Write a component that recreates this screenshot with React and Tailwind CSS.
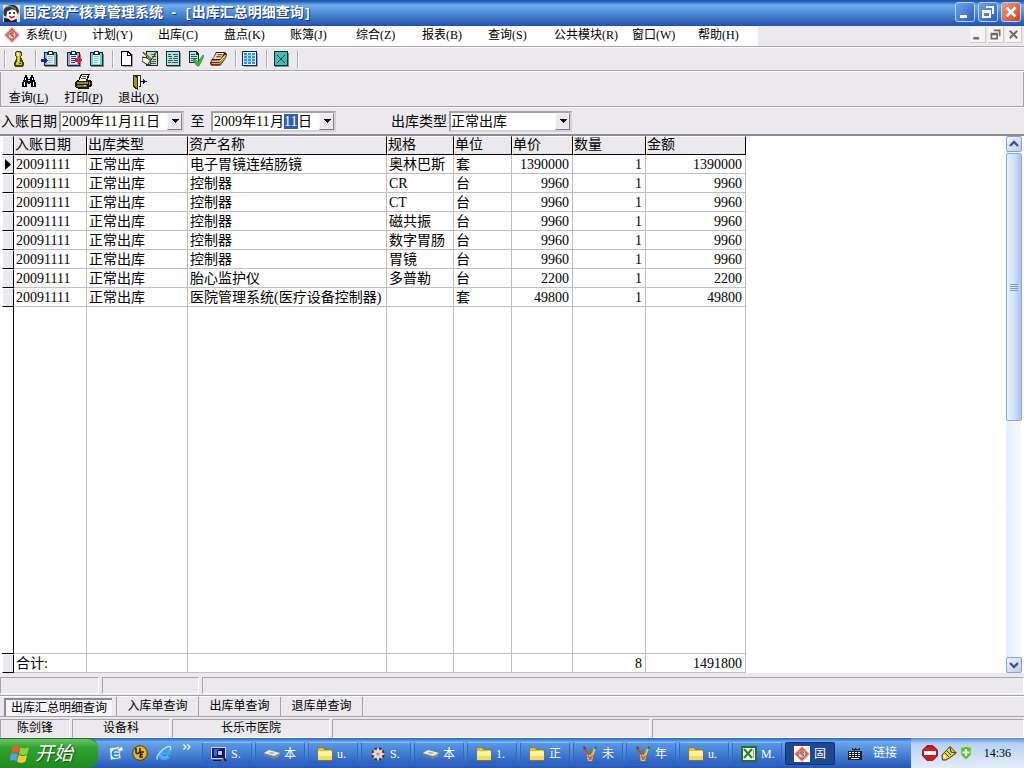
import React from "react";

const SERIF = "font-['Liberation_Serif','Noto_Sans_CJK_SC',serif]";

const Icon = ({ children, className = "w-4 h-4", box = "0 0 16 16", crisp = true }) => (
  <svg viewBox={box} className={"shrink-0 " + className} shapeRendering={crisp ? "crispEdges" : "auto"} aria-hidden="true">
    {children}
  </svg>
);

const AvatarIcon = () => (
  <Icon className="w-[17px] h-[17px]" crisp={false}>
    <path d="M0 0h16v16H0z" fill="#e4e0da" />
    <path d="M1 10C-1 5 2 1 7 0c4-1 8 2 8 6l-1 3-2-4-4-1-4 2-1 5z" fill="#3a3634" />
    <path d="M3 2l3-1 3 1 3 2" stroke="#8d8d8d" fill="none" />
    <path d="M4 6l4-1 4 1 1 4-2 3-4 1-3-3z" fill="#fff" />
    <circle cx="6.500" cy="7.500" r="1" fill="#111" />
    <circle cx="10.500" cy="7.500" r="1" fill="#111" />
    <path d="M6 10.500l2 1.500 3-1.500" stroke="#c22" strokeWidth="1.600" fill="none" />
    <path d="M1 12l4 1 3 2 5-2v3H1z" fill="#1d1d1d" />
  </Icon>
);

const DiamondIcon = ({ boxed = false }) => (
  <Icon className="w-4 h-4" crisp={false}>
    {boxed && <path d="M0 0h16v16H0z" fill="#fff" />}
    <path d="M8 .8L15.200 8 8 15.200.8 8z" fill="#e57a72" stroke="#efa7a1" strokeLinejoin="round" strokeWidth="1.400" />
    <path d="M8 2l6 6-6 6-6-6z" fill="none" stroke="#cc453d" strokeWidth=".9" />
    <circle cx="8" cy="8" r="3.900" fill="#ecdcd6" stroke="#c25049" strokeWidth=".8" />
    <path d="M5.800 8a2.200 2.200 0 0 1 4-1.300M10 9l-1.500 1.200" stroke="#b03a33" strokeWidth="1.200" fill="none" />
    <circle cx="8" cy="8.200" r="1.400" fill="#74857e" />
  </Icon>
);

const KeyIcon = () => (
  <Icon>
    <path d="M5 0h5v1h1v4h-1v2h1v2h1v2h1v4h-1v1H4v-1H3v-4h1V9h1V5H4V1h1z" fill="#4a4600" />
    <path d="M5 1h4v1h1v3H9v6h2v3H5v-3h1V5H5z" fill="#c5bd22" />
    <path d="M6 2h2v3H6z" fill="#ebe9ed" />
    <path d="M7 6h1v5H7zM6 12h1v1H6z" fill="#f2ee84" />
    <path d="M8 12h2v1H8z" fill="#4a4600" />
  </Icon>
);

const Clip = ({ paper, lines, children }) => (
  <Icon className="w-[18px] h-4" box="0 0 18 16">
    <path d="M4 3h13v13H4z" fill="#7d8a8c" />
    <path d="M3 1h13v14H3z" fill="#152b2e" />
    <path d="M4 2h11v12H4z" fill={paper} />
    <path d="M6 4h7v9H6z" fill="#e2f4f1" />
    <path d="M7 0h5v1h1v3H6V1h1z" fill="#152b2e" />
    <path d="M8 1h3v2H8z" fill="#fff" />
    <path d="M7 5.500h5M7 7.500h5M7 9.500h5M7 11.500h4" stroke={lines} />
    {children}
  </Icon>
);

const ClipIn = () => (
  <Clip paper="#8fb5ab" lines="#9db8b0">
    <path d="M0 8h3V6l4 3-4 4v-2H0z" fill="#1226a8" />
  </Clip>
);
const ClipOut = () => (
  <Clip paper="#9ea2ea" lines="#2b2fae">
    <path d="M11 7h3V5l4 4-4 4v-2h-3z" fill="#e01a36" />
  </Clip>
);
const ClipPlain = () => <Clip paper="#74cbd0" lines="#74cbd0" />;

const NewIcon = () => (
  <Icon>
    <path d="M4 3h10v13H4z" fill="#9b9b9b" />
    <path d="M2 0h7l4 4v11H2z" fill="#000" />
    <path d="M3 1h5v4h4v9H3z" fill="#fff" />
    <path d="M9 2v2h2z" fill="#fff" />
  </Icon>
);
const EditIcon = () => (
  <Icon>
    <path d="M4 0h12v15H4z" fill="#11271f" />
    <path d="M5 1h10v13H5z" fill="#bfe0c8" />
    <path d="M9 3.500h5M10 5.500h4M11 8.500h3M10 10.500h4M9 12.500h5" stroke="#3a5a50" />
    <path d="M1 1l9 7-1 1-8-7z" fill="#e8d24a" stroke="#222" strokeWidth=".7" shapeRendering="auto" />
    <path d="M0 6l5 1 4 3-1 4-4-1-4-3z" fill="#fff4cd" stroke="#222" shapeRendering="auto" />
    <path d="M12 3l3-2M6 13l7-9" stroke="#222" shapeRendering="auto" />
  </Icon>
);
const ListIcon = () => (
  <Icon>
    <path d="M2 2h14v14H2z" fill="#8a9696" />
    <path d="M1 0h14v15H1z" fill="#10292c" />
    <path d="M2 1h12v13H2z" fill="#b8e2dd" />
    <path d="M3 3.500h3M8 3.500h5M3 5.500h4M9 5.500h4M4 7.500h3M8 7.500h5M3 9.500h5M9 9.500h4M3 11.500h3M7 11.500h6" stroke="#2b5a5c" />
  </Icon>
);
const CheckIcon = () => (
  <Icon>
    <path d="M1 0h7l3 3v9H1z" fill="#10292c" />
    <path d="M2 1h6v3h2v7H2z" fill="#c5e5df" />
    <path d="M3 3.500h4M3 5.500h6M3 7.500h6M3 9.500h4" stroke="#2b5a5c" />
    <path d="M5 9l2-1 3 3 5-7 1 1-5 10h-2z" fill="#3fb83c" stroke="#14711b" strokeWidth=".6" shapeRendering="auto" />
  </Icon>
);
const BookIcon = () => (
  <Icon className="w-[17px] h-4" box="0 0 17 16" crisp={false}>
    <path d="M6 1h9l2 2-1 4-5 7-2 1H2l-2-2 1-4 2-2z" fill="#3a1c0c" />
    <path d="M6.500 2H14l-3.500 6H3z" fill="#f6dcae" />
    <path d="M7.500 3.700h4.500M6.300 5.700h4.500" stroke="#5a3417" />
    <path d="M1.500 10.200h8.500l5.500-6" stroke="#fff0cf" strokeWidth="1.300" fill="none" />
    <path d="M1.500 12.300h8.500l5.500-6" stroke="#e79a55" strokeWidth="1.200" fill="none" />
    <path d="M2 14.200h7.500l4-4.500" stroke="#c46f38" fill="none" />
  </Icon>
);
const GridIcon = () => (
  <Icon>
    <path d="M2 2h14v14H2z" fill="#9ab" />
    <path d="M0 0h15v15H0z" fill="#0a2d4e" />
    <path d="M1 1h13v13H1z" fill="#eaf9ff" />
    <path d="M2 2h3v11H2zM6 2h3v11H6zM10 2h3v11h-3z" fill="#2f96da" />
    <path d="M2 4.500h11M2 7.500h11M2 10.500h11" stroke="#9ed2f1" />
  </Icon>
);
const CloseBoxIcon = () => (
  <Icon>
    <path d="M2 2h14v14H2z" fill="#7a8c8c" />
    <path d="M1 0h14v15H1z" fill="#07302f" />
    <path d="M2 1h12v13H2z" fill="#46b9b1" />
    <path d="M4 4l8 8M12 4l-8 8" stroke="#0b3f6a" shapeRendering="auto" />
  </Icon>
);

const BinocularsIcon = () => (
  <Icon>
    <path d="M4 1h2v2h1v2h2V3h1V1h2v2h1v3h1v2h1v5h-5V9H9v1H7V9H6v4H1V8h1V6h1V3h1z" fill="#000" />
    <path d="M4 4h1v2H4zM3 8h1v4H3zM11 4h1v2h-1zM12 8h1v4h-1zM7 6h2v1H7z" fill="#fff" />
  </Icon>
);
const PrinterIcon = () => (
  <Icon className="w-[17px] h-4" box="0 0 17 16">
    <path d="M6 0h9v1h-1v3h-1v2h3v1h1v5h-1v1h-2v2H3v-1H1v-1H0V8h1V7h1V6h2V3h1z" fill="#1c1c06" />
    <path d="M7 1h6l-2 6H4z" fill="#fff" />
    <path d="M7 2.500h4M6 4.500h5" stroke="#555" />
    <path d="M2 8h11v2H2z" fill="#8b8a3a" />
    <path d="M2 11h10v2H2z" fill="#77762c" />
    <path d="M14 8h1v3h-1z" fill="#a6a446" />
    <path d="M9 11h2v1H9z" fill="#e8e75a" />
  </Icon>
);
const ExitIcon = () => (
  <Icon>
    <path d="M2 1h8v12H8V3H7v13L2 13z" fill="#2b2a08" />
    <path d="M3 2l3 2v10l-3-2z" fill="#97962c" />
    <path d="M7 2h2v10H7z" fill="#fff" />
    <path d="M10 7h2V5h1v1h1v1h2v1h-2v1h-1v1h-1V8h-2z" fill="#10148c" />
  </Icon>
);

const FolderIcon = () => (
  <Icon crisp={false}>
    <path d="M.5 3l1-1.500h4.500l1.500 2h7.500v11H1z" fill="#e8bd3f" stroke="#8a6a1a" strokeWidth=".7" />
    <path d="M1.200 5.500H15V14H1.200z" fill="#fdf29b" />
    <path d="M1.200 10H15v4H1.200z" fill="#f6da62" />
    <path d="M1.500 5.800h13" stroke="#fffbd8" />
  </Icon>
);
const MonitorIcon = () => (
  <Icon>
    <path d="M0 1h15v12H0z" fill="#d9d5c9" />
    <path d="M1 2h13v10H1z" fill="#141c8e" />
    <path d="M3 3h5v7H3z" fill="#3c6be2" />
    <circle cx="9" cy="7" r="3" fill="#a9cdf5" stroke="#111" />
    <path d="M11 9l4 6" stroke="#2a1c13" strokeWidth="2" shapeRendering="auto" />
    <path d="M2 14.500h8" stroke="#1b1b1b" />
  </Icon>
);
const DriveIcon = () => (
  <Icon crisp={false}>
    <path d="M0 7l5-3 11 3v3l-6 3L0 9z" fill="#7b8282" />
    <path d="M0 7l5-3 11 3-6 3z" fill="#ecece6" />
    <path d="M4 7l3-1 4 1-2 1z" fill="#a2a8a4" />
    <path d="M12 10.500l2-1" stroke="#54e04a" />
  </Icon>
);
const StarIcon = () => (
  <Icon crisp={false}>
    <circle cx="8" cy="8" r="6.800" fill="#39414f" />
    <circle cx="8" cy="8" r="4.600" fill="#8e8a8c" />
    <path d="M8 .5l1.500 4L13 3l-1.500 3.500 4 1.500-4 1.500L13 13l-3.500-1.500-1.500 4-1.500-4L3 13l1.500-3.500L.5 8l4-1.500L3 3l3.500 1.500z" fill="#e8d9d2" />
    <circle cx="8" cy="8" r="1.600" fill="#b98d84" />
  </Icon>
);
const BrushIcon = () => (
  <Icon crisp={false}>
    <path d="M4 7h8l-1.500 8.500h-5z" fill="#dcbf94" stroke="#6d5636" strokeWidth=".7" />
    <path d="M7 9L2.500 2" stroke="#c0462f" strokeWidth="2.200" />
    <path d="M8.300 9V2.500" stroke="#4c8f4a" strokeWidth="1.800" />
    <path d="M10.500 9l2.500-7" stroke="#e9cc4c" strokeWidth="2" />
    <path d="M1 0l3.500 1.500L2 4zM12 2.500L14 0l1 3z" fill="#5a4a36" />
    <path d="M6 10l3.500 3.500M10.500 9.500L7 14" stroke="#b34c38" strokeWidth="1.200" />
  </Icon>
);
const ExcelIcon = () => (
  <Icon>
    <path d="M0 0h16v16H0z" fill="#26702c" />
    <path d="M2 2h12v12H2z" fill="#f1f8ec" />
    <path d="M3 3l8 9M11 3l-8 9" stroke="#2b7a31" strokeWidth="2" shapeRendering="auto" />
    <path d="M12.500 4v8" stroke="#7fb37e" />
  </Icon>
);

const MailIcon = () => (
  <Icon crisp={false}>
    <path d="M1.500 3l10-1.500 1.500 12-10.500 1.500z" fill="#dff1fc" stroke="#5289ac" strokeWidth=".7" />
    <path d="M10.500 6a3.600 3.600 0 1 0 .3 5M5 8.700h6" stroke="#2a86c6" strokeWidth="1.700" fill="none" />
    <path d="M9 4.500L14 1l1.500 4-4 2z" fill="#f6fbff" stroke="#5289ac" strokeWidth=".7" />
  </Icon>
);
const UltraIcon = () => (
  <Icon crisp={false}>
    <circle cx="8" cy="8" r="7.300" fill="#e9b91e" stroke="#4f3c07" />
    <path d="M4 3v4q0 2 2 1.500T8 6V3M12 7H9l-1 5h3M8.500 9.500H11" stroke="#2d2108" strokeWidth="1.600" fill="none" />
  </Icon>
);
const IeIcon = () => (
  <Icon crisp={false}>
    <path d="M12.800 11.200a5.200 5.200 0 1 1 .7-2.900H4" stroke="#3ea6ee" strokeWidth="2.800" fill="none" />
    <path d="M12 10.800a4.600 4.600 0 0 1-7.500-1" stroke="#8fd2fb" strokeWidth="1" fill="none" />
    <path d="M1.500 14.500C-1 11 9 1.500 13.500 1.500c2 0 1.500 2.500.5 4" stroke="#b5e1fb" strokeWidth="1.300" fill="none" />
  </Icon>
);
const WindowsFlag = () => (
  <Icon className="w-5 h-5" box="0 0 18 18" crisp={false}>
    <path d="M2.500 2.500q3-2 6.300 0L7.300 8.500q-3-2-6.300 0z" fill="#ee5a28" />
    <path d="M9.500 3q3.500 2 7.500 0l-1.500 6q-3.500 2-7.500 0z" fill="#8fd13f" />
    <path d="M.8 9.500q3-2 6.300 0l-1.500 6q-3-2-6.300 0z" fill="#5a9cf2" />
    <path d="M7.800 10q3.500 2 7.500 0l-1.500 6q-3.500 2-7.500 0z" fill="#fbcb34" />
  </Icon>
);
const KeyboardIcon = () => (
  <Icon className="w-[14px] h-4" box="0 0 14 16">
    <path d="M4 3h1v1h2V3h1v1h3V3h1v2H7v2H6V5H4z" fill="#16283f" />
    <path d="M0 6h14v9H0z" fill="#16202e" />
    <path d="M1 7.500h12M1 9.500h12M1 11.500h12" stroke="#fff" strokeDasharray="2 1" />
    <path d="M3 13.500h8" stroke="#fff" />
  </Icon>
);
const NoEntryIcon = () => (
  <Icon crisp={false}>
    <path d="M5 .7h6L15.300 5v6L11 15.300H5L.7 11V5z" fill="#cf1c1c" stroke="#7b0d12" />
    <path d="M2 6h12v4H2z" fill="#fff" />
  </Icon>
);
const TagIcon = () => (
  <Icon crisp={false}>
    <path d="M1 10l8-8.500L15.300 8 9 12.500 5 15H1.500z" fill="#e6d93b" stroke="#3b370c" />
    <path d="M9 2l1 5 5 1M4 8l4 4M6 6l4 4" stroke="#3b370c" fill="none" />
    <path d="M2.500 12.500l2-2" stroke="#fffbd0" strokeWidth="1.500" />
  </Icon>
);
const ShieldIcon = () => (
  <Icon className="w-3 h-[14px]" box="0 0 12 14" crisp={false}>
    <path d="M1 1l2 .5L6 .5l3 1 2-.5v8l-5 4.500L1 9z" fill="#58bd2c" stroke="#b6e78f" strokeWidth=".8" />
    <path d="M6 3v7M2.500 6.500h7" stroke="#fff" strokeWidth="2.200" />
  </Icon>
);

const MinGlyph = () => <path d="M4 12h7v3H4z" fill="currentColor" />;
const RestoreGlyph = () => (
  <>
    <path d="M7 3h8v8h-2V5H7z" fill="currentColor" />
    <path d="M3 7h9v8H3zM5 10v3h5v-3z" fill="currentColor" fillRule="evenodd" />
  </>
);
const CloseGlyph = () => (
  <path d="M4.500 4.500l9 9M13.500 4.500l-9 9" stroke="currentColor" strokeWidth="2.500" shapeRendering="auto" />
);

const TitleButton = ({ label, tone, children }) => (
  <button aria-label={label} className={"w-5 h-5 rounded-[3px] border border-[#b9d0f5] text-white flex items-center justify-center " + tone}>
    <svg viewBox="0 0 18 18" className="w-[18px] h-[18px]" shapeRendering="crispEdges">{children}</svg>
  </button>
);
const MdiButton = ({ label, children }) => (
  <button aria-label={label} className="w-4 h-4 bg-[#f5f4f3] border-r border-b border-[#cbc9cc] text-[#6f6b68] flex items-center justify-center">
    <svg viewBox="0 0 18 18" className="w-[15px] h-[15px]">{children}</svg>
  </button>
);

const menus = [
  ["系统", "U"], ["计划", "Y"], ["出库", "C"], ["盘点", "K"], ["账簿", "J"], ["综合", "Z"],
  ["报表", "B"], ["查询", "S"], ["公共模块", "R"], ["窗口", "W"], ["帮助", "H"],
];

const toolGroups = [
  [["密码", KeyIcon]],
  [["入库", ClipIn], ["退库", ClipOut], ["清单", ClipPlain]],
  [["新建", NewIcon], ["编辑", EditIcon], ["列表", ListIcon], ["审核", CheckIcon], ["账本", BookIcon]],
  [["表格", GridIcon]],
  [["关闭", CloseBoxIcon]],
];

const actions = [["查询", "L", BinocularsIcon], ["打印", "P", PrinterIcon], ["退出", "X", ExitIcon]];

const columns = ["入账日期", "出库类型", "资产名称", "规格", "单位", "单价", "数量", "金额"];
const rows = [
  ["电子胃镜连结肠镜", "奥林巴斯", "套", "1390000"],
  ["控制器", "CR", "台", "9960"],
  ["控制器", "CT", "台", "9960"],
  ["控制器", "磁共振", "台", "9960"],
  ["控制器", "数字胃肠", "台", "9960"],
  ["控制器", "胃镜", "台", "9960"],
  ["胎心监护仪", "多普勒", "台", "2200"],
  ["医院管理系统(医疗设备控制器)", "", "套", "49800"],
].map(([name, spec, unit, price]) => ["20091111", "正常出库", name, spec, unit, price, "1", price]);

const tasks = [
  ["S.", MonitorIcon], ["本", DriveIcon], ["u.", FolderIcon], ["S.", StarIcon], ["本", DriveIcon], ["1.", FolderIcon],
  ["正", FolderIcon], ["未", BrushIcon], ["年", BrushIcon], ["u.", FolderIcon], ["M.", ExcelIcon],
];

const Edge = () => <div className="h-[2px] shrink-0 bg-white border-t border-[#a5a3a8]" />;
const Sep = () => <div className="w-[2px] h-[18px] bg-white border-l border-[#b0aeb3]" />;
const Arrow = () => (
  <svg viewBox="0 0 8 4" className="w-2 h-1" shapeRendering="crispEdges" aria-hidden="true"><path d="M0 0h8L4 4z" fill="#000" /></svg>
);

const sunken = "h-[21px] bg-white border-2 border-t-[#a5a3a8] border-l-[#a5a3a8] border-r-[#d4d2d6] border-b-[#d4d2d6] flex items-center";
const raised = "w-[15px] h-[17px] shrink-0 bg-[#ebe9ed] border border-t-[#f8f8f8] border-l-[#f8f8f8] border-r-[#807e82] border-b-[#807e82] flex items-center justify-center";

const DateField = ({ id, label, marked }) => (
  <div role="group" aria-label={label} className={sunken + " w-[125px] pl-px"}>
    <input id={id} aria-label="年" defaultValue="2009" className="w-7 p-0 outline-none" />年
    <input aria-label="月" defaultValue="11" className="w-[14px] p-0 outline-none" />月
    <input aria-label="日" defaultValue="11" className={"w-[14px] h-[15px] p-0 outline-none " + (marked ? "bg-[#335ea8] text-white" : "")} />日
    <button aria-label="选择日期" className={raised + " ml-auto"}><Arrow /></button>
  </div>
);

const ScrollButton = ({ label, d }) => (
  <button aria-label={label} className="w-4 h-4 shrink-0 rounded-[2px] border border-[#8ba3c9] bg-linear-to-br from-[#eef4ff] to-[#bccdf0] flex items-center justify-center">
    <svg viewBox="0 0 10 8" className="w-[10px] h-2"><path d={d} fill="none" stroke="#435676" strokeWidth="2.400" /></svg>
  </button>
);

const StatusPanel = ({ width, children }) => (
  <div className={"border border-t-[#a5a3a8] border-l-[#a5a3a8] border-r-white border-b-white text-center leading-4 overflow-hidden " + width}>{children}</div>
);

const indicator = "bg-[#ebe9ed] border-r border-b border-black border-t border-l border-t-white border-l-white p-0";
const cell = "p-0 pt-px h-[19px] leading-[17px] border-r border-b border-[#c0c0c0] whitespace-nowrap ";
const align = (j) => (j > 4 ? "text-right pr-[3px]" : "pl-[2px]");

export default function App() {
  return (
    <div className={"h-screen flex flex-col overflow-hidden bg-[#ebe9ed] text-black text-[12px] " + SERIF}>
      <header className="h-[26px] shrink-0 flex items-center px-[3px] bg-linear-to-b from-[#2456b4] from-4% via-[#6db0ec] via-20% to-[#2450ad] text-white">
        <AvatarIcon />
        <h1 className="ml-[3px] text-[14px] leading-5 font-bold whitespace-pre [text-shadow:1px_1px_0_#1a3a80]">
          固定资产核算管理系统<span className="font-['Liberation_Mono'] text-[12px]"> - [</span>出库汇总明细查询<span className="font-['Liberation_Mono'] text-[12px]">]</span>
        </h1>
        <div className="ml-auto flex gap-[3px] pb-[2px]">
          <TitleButton label="最小化" tone="bg-linear-to-br from-[#6fa3ec] to-[#2a5cc0]"><MinGlyph /></TitleButton>
          <TitleButton label="还原" tone="bg-linear-to-br from-[#6fa3ec] to-[#2a5cc0]"><RestoreGlyph /></TitleButton>
          <TitleButton label="关闭" tone="bg-linear-to-br from-[#f09a7c] to-[#cf3a12]"><CloseGlyph /></TitleButton>
        </div>
      </header>

      <nav className="h-5 shrink-0 flex justify-between">
        <div className="flex bg-white pl-1 pr-[18px]">
          <div className="w-[22px] pt-px"><DiamondIcon /></div>
          {menus.map(([name, k]) => (
            <button key={k} className={"text-left leading-4 pb-[2px] whitespace-nowrap " + (name.length > 2 ? "w-[78px]" : k === "H" ? "w-[42px]" : "w-[66px]")}>
              {name}({k})
            </button>
          ))}
        </div>
        <div className="flex gap-[2px] pt-px pr-[2px]">
          <MdiButton label="最小化窗口"><MinGlyph /></MdiButton>
          <MdiButton label="还原窗口"><RestoreGlyph /></MdiButton>
          <MdiButton label="关闭窗口"><CloseGlyph /></MdiButton>
        </div>
      </nav>
      <Edge />

      <div role="toolbar" className="h-[22px] shrink-0 flex items-center pl-1">
        {toolGroups.map((g, i) => (
          <React.Fragment key={i}>
            <Sep />
            <div className="flex gap-[6px] pl-1 pr-2">
              {g.map(([label, I]) => <button key={label} aria-label={label} className="w-[17px] flex justify-center"><I /></button>)}
            </div>
          </React.Fragment>
        ))}
        <Sep />
      </div>
      <Edge />

      <div role="toolbar" className="h-[34px] shrink-0 flex border-l border-r border-[#a5a3a8]">
        {actions.map(([name, k, I]) => (
          <button key={k} className="w-[55px] pt-[2px] flex flex-col items-center">
            <I />
            <span className="leading-4">{name}(<u>{k}</u>)</span>
          </button>
        ))}
      </div>
      <Edge />

      <form className="h-7 shrink-0 flex items-center text-[14px] leading-[19px] whitespace-nowrap border-b-2 border-[#8d8b90]" onSubmit={(e) => e.preventDefault()}>
        <label htmlFor="from" className="w-[59px] pl-px">入账日期</label>
        <DateField id="from" label="起始日期" />
        <label htmlFor="to" className="w-[27px] text-center">至</label>
        <DateField id="to" label="截止日期" marked />
        <label htmlFor="kind" className="ml-[55px] w-[58px]">出库类型</label>
        <div className={sunken + " relative w-[123px]"}>
          <select id="kind" className="appearance-none w-full h-[17px] p-0 leading-[17px] outline-none bg-transparent">
            <option>正常出库</option>
          </select>
          <span className={raised + " absolute right-0 top-0 pointer-events-none"}><Arrow /></span>
        </div>
      </form>

      <main className="flex-1 min-h-0 flex bg-white pl-[2px] pr-[2px] text-[14px] leading-[18px]">
        <table className="table-fixed border-separate border-spacing-0 w-[744px] shrink-0">
          <colgroup>
            <col className="w-[12px]" /><col className="w-[73px]" /><col className="w-[101px]" /><col className="w-[199px]" />
            <col className="w-[67px]" /><col className="w-[58px]" /><col className="w-[61px]" /><col className="w-[73px]" /><col className="w-[100px]" />
          </colgroup>
          <thead>
            <tr className="h-[19px]">
              <th className={indicator} aria-label="行" />
              {columns.map((c) => (
                <th key={c} scope="col" className="h-[19px] p-0 pb-px text-left font-normal leading-4 bg-[#ebe9ed] border-t border-l border-t-white border-l-white border-r border-b border-r-black border-b-black">{c}</th>
              ))}
            </tr>
          </thead>
          <tbody>
            {rows.map((r, i) => (
              <tr key={i} className="h-[19px]">
                <td className={indicator}>
                  {i === 0 && <svg viewBox="0 0 6 11" className="w-[6px] h-[11px] ml-[2px]"><path d="M0 0l6 5.500L0 11z" fill="#000" /></svg>}
                </td>
                {r.map((v, j) => (
                  <td key={j} className={cell + align(j)}>{v}</td>
                ))}
              </tr>
            ))}
            <tr>
              <td className="p-0 border-r border-b border-black">&nbsp;</td>
              {columns.map((c) => <td key={c} className="p-0 border-r border-b border-[#c0c0c0]" />)}
            </tr>
          </tbody>
          <tfoot>
            <tr className="h-[19px]">
              <td className={indicator} />
              {["合计:", "", "", "", "", "", "8", "1491800"].map((v, j) => (
                <td key={j} className={cell + align(j)}>{v}</td>
              ))}
            </tr>
          </tfoot>
        </table>
        <div className="ml-auto w-4 flex flex-col bg-linear-to-r from-[#e4effc] to-[#f8fbff]">
          <ScrollButton label="向上滚动" d="M1 6l4-4 4 4" />
          <div className="h-[268px] mt-px rounded-[2px] border border-[#8fa9c8] bg-linear-to-r from-[#e3f0ff] via-[#cfe3fc] to-[#a9c5e8] flex flex-col items-center justify-center gap-px">
            {[0, 1, 2, 3].map((n) => <i key={n} className="w-2 h-px bg-[#7f9cc4]" />)}
          </div>
          <div className="flex-1" />
          <ScrollButton label="向下滚动" d="M1 2l4 4 4-4" />
        </div>
      </main>

      <div className="h-[22px] shrink-0 pt-1 pb-[1px] flex gap-[3px]">
        <StatusPanel width="w-[99px]" />
        <StatusPanel width="w-[97px]" />
        <StatusPanel width="flex-1" />
      </div>

      <div role="tablist" className="h-[23px] shrink-0 border-t border-[#a5a3a8] pb-px">
        <div className="h-[21px] border-b border-[#a5a3a8] border-t border-t-white flex items-center pl-1">
          <button role="tab" aria-selected="true" className="w-[108px] h-[18px] leading-4 border-t-2 border-l-2 border-[#8d8b90] bg-[#f5f4f6] whitespace-nowrap">出库汇总明细查询</button>
          <span className="w-1" />
          {["入库单查询", "出库单查询", "退库单查询"].map((t) => (
            <button key={t} role="tab" aria-selected="false" className="w-[82px] h-[19px] pb-px leading-4 border-l border-[#a5a3a8]">{t}</button>
          ))}
          <span className="h-[19px] border-l border-[#a5a3a8]" />
        </div>
      </div>

      <footer className="h-5 shrink-0 pt-px flex gap-[2px]">
        <StatusPanel width="w-[70px]">陈剑锋</StatusPanel>
        <StatusPanel width="w-[98px]">设备科</StatusPanel>
        <StatusPanel width="w-[158px]">长乐市医院</StatusPanel>
        <StatusPanel width="w-[318px]" />
        <StatusPanel width="flex-1" />
      </footer>

      <div className="h-[30px] shrink-0 flex text-white bg-linear-to-b from-[#2a5fc4] via-[#6aa8ec] via-12% to-[#2858b8]">
        <button className="w-[98px] shrink-0 flex items-center gap-[5px] pl-[10px] rounded-r-[10px] border-t border-[#1d6b1d] bg-linear-to-b from-[#6cc36a] via-[#2fa32f] via-30% to-[#1f8a22] text-[19px] leading-6 italic [text-shadow:1px_1px_1px_#155015]">
          <WindowsFlag />开始
        </button>
        <div className="flex items-center gap-2 pl-[10px] shrink-0">
          <button aria-label="邮件"><MailIcon /></button>
          <button aria-label="编辑器"><UltraIcon /></button>
          <button aria-label="浏览器"><IeIcon /></button>
        </div>
        <button aria-label="更多" className="w-[30px] shrink-0 pb-3 flex items-center justify-center">
          <svg viewBox="0 0 8 6" className="w-2 h-[6px]"><path d="M.5 .5L3 3 .5 5.500M4.500 .5L7 3 4.500 5.500" fill="none" stroke="#fff" strokeWidth="1.200" /></svg>
        </button>
        <div className="flex gap-[3px] pt-1 pb-[3px]">
          {tasks.map(([t, I], i) => (
            <button key={i} className="w-[50px] pl-2 flex items-center gap-1 rounded-[2px] border border-[#3468c4] border-t-[#8abdf2] bg-linear-to-b from-[#5a98e6] to-[#2c60c0] leading-4 whitespace-nowrap">
              <I />{t}
            </button>
          ))}
          <button className="w-[50px] pl-2 flex items-center gap-1 rounded-[2px] border border-[#14306e] bg-[#1f4792] leading-4 whitespace-nowrap">
            <DiamondIcon boxed />固
          </button>
        </div>
        <div className="flex items-center gap-[11px] pl-[13px] pr-[14px] ml-auto whitespace-nowrap pb-px">
          <KeyboardIcon />链接
        </div>
        <div className="w-[113px] shrink-0 flex items-center gap-[3px] pl-[11px] bg-linear-to-b from-[#5b8fe0] via-[#b9d2f3] via-20% to-[#e4edf9] text-black">
          <NoEntryIcon /><TagIcon /><ShieldIcon />
          <time className="ml-auto pr-[13px] leading-4">14:36</time>
        </div>
      </div>
    </div>
  );
}
